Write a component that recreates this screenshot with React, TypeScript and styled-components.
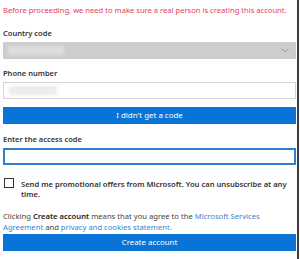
import styled, { createGlobalStyle } from 'styled-components';

const GlobalStyle = createGlobalStyle`
  html, body {
    margin: 0;
    background: #fff;
  }
  body {
    font-family: "Noto Sans", "Open Sans", sans-serif;
    color: #222;
  }
`;

// 전체 프레임 (오른쪽 어두운 테두리)
const Frame = styled.div`
  width: 293px;
  height: 259px;
  padding: 0 1px 0 3px;
  border-right: 2px solid #3a3a3a;
  box-sizing: content-box;
  display: flex;
  flex-direction: column;
`;

const Warning = styled.p`
  margin: 5px 0 0 0;
  font-size: 7.6px;
  line-height: 10px;
  color: #e0425a;
  white-space: nowrap;
`;

const Label = styled.label<{ $top: number }>`
  display: block;
  margin-top: ${(p) => p.$top}px;
  font-size: 7.5px;
  line-height: 10px;
  font-weight: 600;
  color: #333;
`;

const Select = styled.div`
  margin-top: 4px;
  height: 17px;
  background: #cdcdcd;
  display: flex;
  align-items: center;
  justify-content: space-between;
  padding: 0 7px 0 5px;
`;

const Blurred = styled.span<{ $w: number; $bg: string }>`
  display: block;
  width: ${(p) => p.$w}px;
  height: 9px;
  background: ${(p) => p.$bg};
  filter: blur(1.5px);
`;

const Input = styled.div<{ $focused?: boolean }>`
  margin-top: 4px;
  height: 17px;
  box-sizing: border-box;
  border: ${(p) => (p.$focused ? '2px solid #2f7fd1' : '1px solid #d6d2d2')};
  display: flex;
  align-items: center;
  padding-left: 5px;
`;

const PrimaryButton = styled.button<{ $top: number }>`
  margin-top: ${(p) => p.$top}px;
  height: 17px;
  border: none;
  padding: 0;
  background: #0a74d6;
  color: #fff;
  font-family: inherit;
  font-size: 7.9px;
  line-height: 17px;
  text-align: center;
`;

const CheckRow = styled.div`
  margin-top: 13px;
  display: flex;
  gap: 7px;
  align-items: flex-start;
`;

const Box = styled.span`
  flex-shrink: 0;
  width: 10px;
  height: 10px;
  box-sizing: border-box;
  border: 1px solid #333;
  margin: 0 0 0 1px;
`;

const CheckText = styled.span`
  font-size: 7.6px;
  line-height: 10px;
  font-weight: 600;
  color: #333;
  padding-top: 1px;
`;

const Legal = styled.p`
  margin: 12px 0 0 0;
  font-size: 7.65px;
  line-height: 11px;
  color: #444;

  b {
    font-weight: 600;
    color: #222;
  }

  a {
    color: #3a85c9;
    text-decoration: none;
  }
`;

const Chevron = () => (
  <svg width="8" height="5" viewBox="0 0 8 5">
    <path d="M0.5 0.5 L4 4 L7.5 0.5" fill="none" stroke="#9a9a9a" strokeWidth="1" />
  </svg>
);

export default function App() {
  return (
    <>
      <GlobalStyle />
      <Frame>
        <Warning>Before proceeding, we need to make sure a real person is creating this account.</Warning>
        <Label $top={13}>Country code</Label>
        <Select>
          <Blurred $w={56} $bg="#dcdcdc" />
          <Chevron />
        </Select>
        <Label $top={9}>Phone number</Label>
        <Input>
          <Blurred $w={48} $bg="#ececec" />
        </Input>
        <PrimaryButton $top={8}>I didn't get a code</PrimaryButton>
        <Label $top={10}>Enter the access code</Label>
        <Input $focused />
        <CheckRow>
          <Box />
          <CheckText>Send me promotional offers from Microsoft. You can unsubscribe at any time.</CheckText>
        </CheckRow>
        <Legal>
          Clicking <b>Create account</b> means that you agree to the <a href="#">Microsoft Services Agreement</a> and{' '}
          <a href="#">privacy and cookies statement.</a>
        </Legal>
        <PrimaryButton $top={1}>Create account</PrimaryButton>
      </Frame>
    </>
  );
}
